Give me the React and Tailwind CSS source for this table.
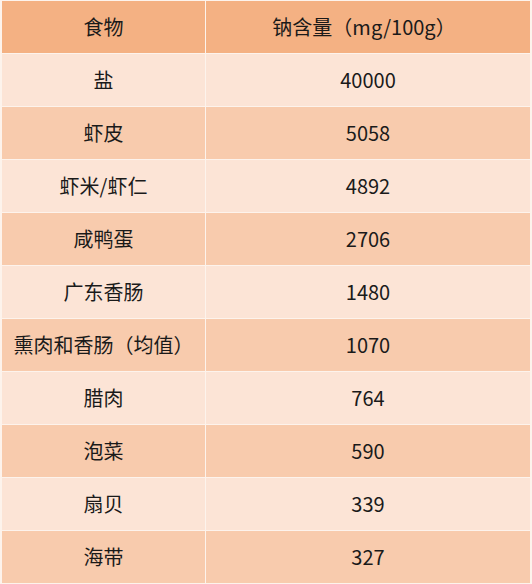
import React from "react";

const rows = [
  ["盐", "40000"],
  ["虾皮", "5058"],
  ["虾米/虾仁", "4892"],
  ["咸鸭蛋", "2706"],
  ["广东香肠", "1480"],
  ["熏肉和香肠（均值）", "1070"],
  ["腊肉", "764"],
  ["泡菜", "590"],
  ["扇贝", "339"],
  ["海带", "327"],
];

export default function App() {
  return (
    <div
      className="w-[532px] h-[584px] bg-[#fdf3ec] pt-[1px] pl-[2px] pr-[2px] text-[20px] text-[#1a1a1a]"
      style={{ fontFamily: '"Noto Sans CJK SC", "Noto Sans", sans-serif' }}
    >
      <div className="grid grid-cols-[203px_1fr] gap-x-[1px] border-b border-[#fdf3ec] bg-[#fdf3ec]">
        <div className="h-[52px] bg-[#f4b183] flex items-center justify-center">食物</div>
        <div className="h-[52px] bg-[#f4b183] flex items-center justify-center pr-[8px]">钠含量（mg/100g）</div>
      </div>
      {rows.map(([food, value], i) => {
        const bg = i % 2 === 0 ? "bg-[#fce4d6]" : "bg-[#f8cbad]";
        return (
          <div key={food} className="grid grid-cols-[203px_1fr] gap-x-[1px] border-b border-[#fdf3ec]">
            <div className={`h-[52px] ${bg} flex items-center justify-center`}>{food}</div>
            <div className={`h-[52px] ${bg} flex items-center justify-center`}>{value}</div>
          </div>
        );
      })}
    </div>
  );
}
